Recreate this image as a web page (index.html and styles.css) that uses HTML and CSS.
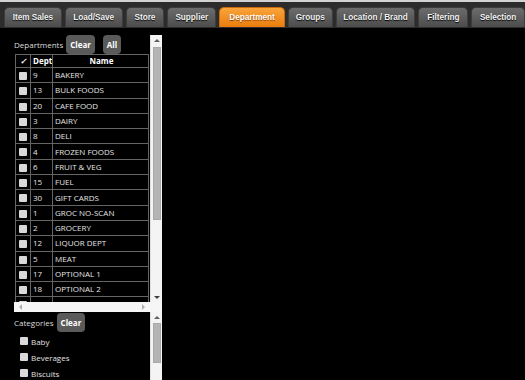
FILE: index.html
```html
<!DOCTYPE html>
<html lang="en">
  <head>
    <meta charset="UTF-8" />
    <title>Report Filters</title>
    <link rel="stylesheet" href="styles.css">
  </head>
  <body>

    <div class="tabbar">
      <div class="tab">Item Sales</div>
      <div class="tab">Load/Save</div>
      <div class="tab">Store</div>
      <div class="tab">Supplier</div>
      <div class="tab active">Department</div>
      <div class="tab">Groups</div>
      <div class="tab">Location / Brand</div>
      <div class="tab">Filtering</div>
      <div class="tab">Selection</div>
    </div>

    <div class="workspace">
      <div class="side">

        <div class="dept-box">
          <div class="dept-view">
            <div class="list-head">
              <span class="list-title">Departments</span>
              <span class="btn">Clear</span>
              <span class="btn btn-all">All</span>
            </div>
            <table class="grid">
              <tr class="grid-head"><th class="col-check">&#10003;</th><th class="col-dept">Dept</th><th class="col-name">Name</th></tr>
              <tr><td><span class="cb"></span></td><td>9</td><td>BAKERY</td></tr>
              <tr><td><span class="cb"></span></td><td>13</td><td>BULK FOODS</td></tr>
              <tr><td><span class="cb"></span></td><td>20</td><td>CAFE FOOD</td></tr>
              <tr><td><span class="cb"></span></td><td>3</td><td>DAIRY</td></tr>
              <tr><td><span class="cb"></span></td><td>8</td><td>DELI</td></tr>
              <tr><td><span class="cb"></span></td><td>4</td><td>FROZEN FOODS</td></tr>
              <tr><td><span class="cb"></span></td><td>6</td><td>FRUIT &amp; VEG</td></tr>
              <tr><td><span class="cb"></span></td><td>15</td><td>FUEL</td></tr>
              <tr><td><span class="cb"></span></td><td>30</td><td>GIFT CARDS</td></tr>
              <tr><td><span class="cb"></span></td><td>1</td><td>GROC NO-SCAN</td></tr>
              <tr><td><span class="cb"></span></td><td>2</td><td>GROCERY</td></tr>
              <tr><td><span class="cb"></span></td><td>12</td><td>LIQUOR DEPT</td></tr>
              <tr><td><span class="cb"></span></td><td>5</td><td>MEAT</td></tr>
              <tr><td><span class="cb"></span></td><td>17</td><td>OPTIONAL 1</td></tr>
              <tr><td><span class="cb"></span></td><td>18</td><td>OPTIONAL 2</td></tr>
              <tr><td><span class="cb"></span></td><td>11</td><td>PASSBOOK SAVINGS</td></tr>
            </table>
          </div>
          <div class="vscroll">
            <span class="arrow-up"></span>
            <div class="thumb dept-thumb"></div>
            <span class="fill"></span>
            <span class="arrow-down"></span>
          </div>
          <div class="hscroll">
            <span class="arrow-left"></span>
            <span class="arrow-right"></span>
          </div>
          <div class="corner"></div>
        </div>

        <div class="cat-box">
          <div class="cat-view">
            <div class="list-head cat-head">
              <span class="list-title">Categories</span>
              <span class="btn">Clear</span>
            </div>
            <ul class="cat-list">
              <li><span class="cb"></span>Baby</li>
              <li><span class="cb"></span>Beverages</li>
              <li><span class="cb"></span>Biscuits</li>
            </ul>
          </div>
          <div class="vscroll">
            <span class="arrow-up"></span>
            <div class="thumb cat-thumb"></div>
            <span class="fill"></span>
          </div>
        </div>

      </div>
      <div class="main"></div>
    </div>

  </body>
</html>
```

FILE: styles.css
```css
*{
  margin: 0;
  padding: 0;
  box-sizing: border-box;
}

body{
  width: 525px;
  height: 380px;
  overflow: hidden;
  background-color: #000;
  color: #e6e6e6;
  font-family: "Open Sans", "Noto Sans", sans-serif;
  font-size: 8px;
}

/* tab strip */
.tabbar{
  height: 28px;
  border-top: 2px solid #d2d2d2;
  background-color: #2c2c2c;
  padding: 5px 0 0 4px;
  display: flex;
  gap: 3px;
}

.tab{
  height: 20px;
  border: 1px solid #3c3c3c;
  border-bottom: none;
  border-radius: 5px 5px 0 0;
  background: linear-gradient(#6c6c6c, #4c4c4c);
  color: #f2f2f2;
  font-family: "Liberation Sans", Arial, sans-serif;
  font-weight: bold;
  font-size: 8.2px;
  text-shadow: 0 1px 1px #000;
  display: flex;
  align-items: center;
  justify-content: center;
}

.tab:nth-child(1){ width: 58px; }
.tab:nth-child(2){ width: 58px; }
.tab:nth-child(3){ width: 39px; }
.tab:nth-child(4){ width: 49px; }
.tab:nth-child(5){ width: 66px; }
.tab:nth-child(6){ width: 45px; }
.tab:nth-child(7){ width: 80px; }
.tab:nth-child(8){ width: 50px; }
.tab:nth-child(9){ width: 54px; }

.tab.active{
  background: linear-gradient(#f9a43a, #e97d0e);
  border-color: #c86a0a;
  color: #fff;
  text-shadow: 0 1px 1px #8a4000;
}

/* page body */
.workspace{
  display: flex;
  height: 352px;
}

.side{
  width: 162px;
  padding-left: 14px;
  display: flex;
  flex-direction: column;
}

.main{
  flex: 1;
}

.dept-box{
  margin-top: 7px;
  display: grid;
  grid-template-columns: 136px 12px;
  grid-template-rows: 267px 10px;
}

.dept-view{
  overflow: hidden;
}

.list-head{
  height: 19px;
  display: flex;
  align-items: center;
}

.list-title{
  color: #dcdcdc;
  margin-right: 3px;
}

.btn{
  height: 19px;
  padding: 0 4px;
  border-radius: 4px;
  background-color: #5a5a5a;
  color: #fff;
  font-weight: bold;
  display: flex;
  align-items: center;
  justify-content: center;
}

.btn-all{
  width: 18px;
  margin-left: 8px;
}

/* department grid */
.grid{
  margin-left: 1px;
  width: 134px;
  border-collapse: collapse;
  border: 1px solid #6a6a6a;
  table-layout: fixed;
}

.grid tr{
  height: 15.3px;
}

.grid .grid-head{
  height: 13px;
}

.grid th, .grid td{
  border: 1px solid #646464;
  padding: 0 0 0 2px;
  text-align: left;
  white-space: nowrap;
  overflow: hidden;
  color: #e4e4e4;
  line-height: 12px;
}

.grid th{
  color: #fff;
  font-weight: bold;
}

.grid .col-check{
  width: 15px;
  text-align: center;
  padding: 0;
  font-style: italic;
}

.grid .col-dept{
  width: 22px;
}

.grid .col-name{
  text-align: center;
}

.grid td:first-child{
  padding: 0;
  text-align: center;
}

.cb{
  display: inline-block;
  width: 8px;
  height: 8px;
  border-radius: 1px;
  background-color: #d9d9d9;
  vertical-align: middle;
}

/* fake scrollbars */
.vscroll{
  background-color: #f4f4f4;
  border-left: 1px solid #e0e0e0;
  display: flex;
  flex-direction: column;
  align-items: center;
  padding: 4px 0 3px;
}

.thumb{
  width: 8px;
  background-color: #b4b4b4;
  border: 1px solid #a8a8a8;
}

.dept-thumb{
  margin-top: 5px;
  height: 173px;
}

.cat-thumb{
  margin-top: 4px;
  height: 40px;
}

.fill{
  flex: 1;
}

.arrow-up{
  border-left: 3px solid transparent;
  border-right: 3px solid transparent;
  border-bottom: 3px solid #606060;
}

.arrow-down{
  border-left: 3px solid transparent;
  border-right: 3px solid transparent;
  border-top: 3px solid #404040;
}

.hscroll{
  background-color: #f6f6f6;
  display: flex;
  justify-content: space-between;
  align-items: center;
  padding: 0 5px;
}

.arrow-left{
  border-top: 3px solid transparent;
  border-bottom: 3px solid transparent;
  border-right: 3px solid #b0b0b0;
}

.arrow-right{
  border-top: 3px solid transparent;
  border-bottom: 3px solid transparent;
  border-left: 3px solid #b0b0b0;
}

.corner{
  background-color: #f6f6f6;
}

/* categories */
.cat-box{
  flex: 1;
  display: grid;
  grid-template-columns: 136px 12px;
}

.cat-head{
  margin-top: 1px;
}

.cat-list{
  list-style: none;
  padding: 1px 0 0 6px;
}

.cat-list li{
  height: 16px;
  display: flex;
  align-items: center;
  gap: 3px;
  color: #e0e0e0;
}
```
